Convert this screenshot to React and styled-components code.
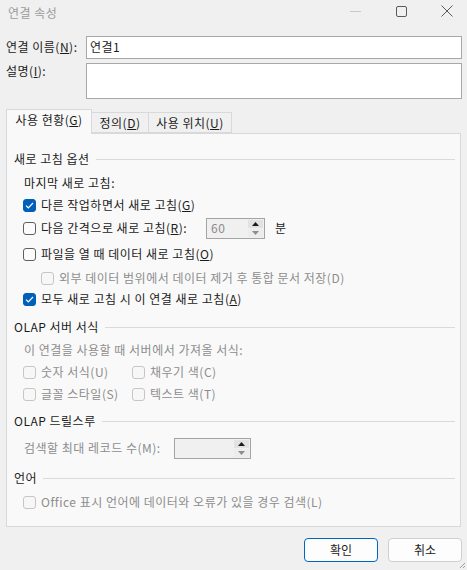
import styled, { createGlobalStyle } from 'styled-components'

const Global = createGlobalStyle`
  html, body { margin: 0; padding: 0; }
  body {
    background: #f0f0f0;
    font-family: "Noto Sans CJK KR", "Noto Sans", sans-serif;
    font-size: 12px;
    letter-spacing: 0.5px;
    color: #1b1b1b;
  }
  #root { width: 467px; height: 570px; overflow: hidden; }
`

const Window = styled.div`
  position: relative;
  width: 467px;
  height: 570px;
  display: flex;
  flex-direction: column;
  background: #f0f0f0;
`

const TitleBar = styled.div`
  height: 28px;
  display: flex;
  align-items: center;
  justify-content: space-between;
  padding-left: 8px;
`

const Title = styled.span`
  color: #9c9c9c;
  line-height: 1;
  margin-top: -3px;
`

const Controls = styled.div`
  display: flex;
  margin-right: -3px;
  height: 28px;
`

const Ctl = styled.div`
  width: 46px;
  height: 28px;
  display: flex;
  align-items: center;
  justify-content: center;
  margin-top: -3px;
`

const FieldRow = styled.div`
  display: flex;
  align-items: flex-start;
  padding: 0 5px 0 6px;
  margin-top: ${p => p.$mt || 0}px;
`

const FieldLabel = styled.label`
  width: 80px;
  line-height: 1;
  padding-top: ${p => p.$pt || 0}px;
`

const TextInput = styled.div`
  flex: 1;
  height: ${p => p.$h}px;
  box-sizing: border-box;
  border: 1px solid #a8a8a8;
  background: #fff;
  padding: 4px 3px;
  line-height: 1;
`

const Tabs = styled.div`
  display: flex;
  align-items: flex-end;
  margin: 10px 0 0 6px;
  height: 24px;
  position: relative;
  z-index: 1;
`

const Tab = styled.div`
  box-sizing: border-box;
  width: ${p => p.$w}px;
  height: ${p => (p.$active ? 25 : 21)}px;
  margin-bottom: ${p => (p.$active ? -1 : 0)}px;
  display: flex;
  align-items: center;
  justify-content: center;
  line-height: 1;
  background: ${p => (p.$active ? '#f9f9f9' : '#f0f0f0')};
  border: 1px solid #d9d9d9;
  border-bottom: ${p => (p.$active ? 'none' : '1px solid #d9d9d9')};
  border-left: ${p => (p.$first ? '1px solid #d9d9d9' : 'none')};
  padding-bottom: ${p => (p.$active ? 4 : 0)}px;
`

const Panel = styled.div`
  box-sizing: border-box;
  margin-left: 6px;
  width: 455px;
  height: 394px;
  background: #f9f9f9;
  border: 1px solid #d9d9d9;
  padding: 13px 5px 0 7px;
  display: flex;
  flex-direction: column;
`

const Section = styled.div`
  display: flex;
  flex-direction: column;
  margin-top: ${p => p.$mt || 0}px;
`

const GroupHead = styled.div`
  height: 24px;
  display: flex;
  align-items: center;
  line-height: 1;
  gap: 6px;
  &::after {
    content: '';
    flex: 1;
    height: 1px;
    background: #dadada;
  }
`

const Row = styled.div`
  height: ${p => p.$h || 22}px;
  display: flex;
  align-items: center;
  padding-left: ${p => p.$indent || 9}px;
  line-height: 1;
  color: ${p => (p.$disabled ? '#8d8d8d' : 'inherit')};
`

const RowLabel = styled.span`
  width: ${p => p.$w}px;
  flex: none;
`

const CheckWrap = styled.label`
  display: flex;
  align-items: center;
  gap: 5px;
  flex: none;
  width: ${p => (p.$w ? `${p.$w}px` : 'auto')};
  color: ${p => (p.$disabled ? '#8d8d8d' : 'inherit')};
`

const Box = styled.span`
  box-sizing: border-box;
  width: 13px;
  height: 13px;
  border-radius: 3px;
  flex: none;
  display: flex;
  align-items: center;
  justify-content: center;
  background: ${p => (p.$checked ? '#005fb8' : p.$disabled ? '#f7f7f7' : '#fbfbfb')};
  border: 1px solid ${p => (p.$checked ? '#005fb8' : p.$disabled ? '#c6c6c6' : '#5f5f5f')};
`

const Spin = styled.div`
  box-sizing: border-box;
  width: ${p => p.$w}px;
  height: ${p => p.$h}px;
  flex: none;
  border: 1px solid #a4a4a4;
  background: #f0f0f0;
  display: flex;
  align-items: stretch;
  padding: 1px;
`

const SpinValue = styled.div`
  flex: 1;
  display: flex;
  align-items: center;
  padding-left: 3px;
  color: #8b8b8b;
`

const SpinBtns = styled.div`
  width: 15px;
  display: flex;
  flex-direction: column;
  gap: 1px;
`

const SpinBtn = styled.div`
  flex: 1;
  display: flex;
  align-items: center;
  justify-content: center;
  background: ${p => (p.$up ? '#e2e2e2' : '#ececec')};
`

const Unit = styled.span`
  margin-left: 10px;
`

const Footer = styled.div`
  display: flex;
  justify-content: flex-end;
  gap: 10px;
  padding-right: 5px;
  margin-top: 11px;
`

const Button = styled.button`
  box-sizing: border-box;
  width: 74px;
  height: 24px;
  border-radius: 4px;
  background: #fdfdfd;
  border: 1px solid ${p => (p.$primary ? '#0067c0' : '#cfcfcf')};
  font: inherit;
  color: #1b1b1b;
  line-height: 1;
  padding: 0;
`

const Grip = styled.svg`
  position: absolute;
  right: 1px;
  bottom: 1px;
`

const Check = ({ checked, disabled, w, children }) => (
  <CheckWrap $w={w} $disabled={disabled}>
    <Box $checked={checked} $disabled={disabled}>
      {checked && (
        <svg width="9" height="7" viewBox="0 0 9 7">
          <path d="M1 3.6 L3.3 5.8 L8 1" fill="none" stroke="#fff" strokeWidth="1.2" />
        </svg>
      )}
    </Box>
    <span>{children}</span>
  </CheckWrap>
)

const Spinner = ({ w, h, value }) => (
  <Spin $w={w} $h={h}>
    <SpinValue>{value}</SpinValue>
    <SpinBtns>
      <SpinBtn $up>
        <svg width="7" height="4" viewBox="0 0 7 4"><path d="M0 4 L3.5 0 L7 4Z" fill="#1b1b1b" /></svg>
      </SpinBtn>
      <SpinBtn>
        <svg width="7" height="4" viewBox="0 0 7 4"><path d="M0 0 L3.5 4 L7 0Z" fill="#8d8d8d" /></svg>
      </SpinBtn>
    </SpinBtns>
  </Spin>
)

export default function App() {
  return (
    <Window>
      <Global />
      <TitleBar>
        <Title>연결 속성</Title>
        <Controls>
          <Ctl>
            <svg width="11" height="1"><rect width="11" height="1" fill="#c8c8c8" /></svg>
          </Ctl>
          <Ctl>
            <svg width="11" height="11"><rect x="0.5" y="0.5" width="10" height="10" rx="1.5" fill="none" stroke="#5a5a5a" /></svg>
          </Ctl>
          <Ctl>
            <svg width="12" height="12"><path d="M0.5 0.5 L11.5 11.5 M11.5 0.5 L0.5 11.5" stroke="#5a5a5a" strokeWidth="1" /></svg>
          </Ctl>
        </Controls>
      </TitleBar>

      <FieldRow $mt={8}>
        <FieldLabel $pt={5}>연결 이름(<u>N</u>):</FieldLabel>
        <TextInput $h={23}>연결1</TextInput>
      </FieldRow>
      <FieldRow $mt={4}>
        <FieldLabel $pt={2}>설명(<u>I</u>):</FieldLabel>
        <TextInput $h={36} />
      </FieldRow>

      <Tabs>
        <Tab $w={86} $active $first>사용 현황(<u>G</u>)</Tab>
        <Tab $w={57}>정의(<u>D</u>)</Tab>
        <Tab $w={83}>사용 위치(<u>U</u>)</Tab>
      </Tabs>

      <Panel>
        <Section>
          <GroupHead>새로 고침 옵션</GroupHead>
          <Row $h={24} $indent={10}>마지막 새로 고침:</Row>
          <Row $h={20}><Check checked>다른 작업하면서 새로 고침(<u>G</u>)</Check></Row>
          <Row $h={26}>
            <Check w={183}>다음 간격으로 새로 고침(<u>R</u>):</Check>
            <Spinner w={59} h={21} value="60" />
            <Unit>분</Unit>
          </Row>
          <Row $h={26}><Check>파일을 열 때 데이터 새로 고침(<u>O</u>)</Check></Row>
          <Row $h={22} $indent={27}><Check disabled>외부 데이터 범위에서 데이터 제거 후 통합 문서 저장(D)</Check></Row>
          <Row $h={20}><Check checked>모두 새로 고침 시 이 연결 새로 고침(<u>A</u>)</Check></Row>
        </Section>

        <Section $mt={6}>
          <GroupHead>OLAP 서버 서식</GroupHead>
          <Row $disabled $indent={10}>이 연결을 사용할 때 서버에서 가져올 서식:</Row>
          <Row>
            <Check disabled w={109}>숫자 서식(U)</Check>
            <Check disabled>채우기 색(C)</Check>
          </Row>
          <Row>
            <Check disabled w={109}>글꼴 스타일(S)</Check>
            <Check disabled>텍스트 색(T)</Check>
          </Row>
        </Section>

        <Section $mt={4}>
          <GroupHead>OLAP 드릴스루</GroupHead>
          <Row $h={30} $indent={10} $disabled>
            <RowLabel $w={150}>검색할 최대 레코드 수(M):</RowLabel>
            <Spinner w={77} h={21} value="" />
          </Row>
        </Section>

        <Section $mt={3}>
          <GroupHead>언어</GroupHead>
          <Row $h={24}><Check disabled>Office 표시 언어에 데이터와 오류가 있을 경우 검색(L)</Check></Row>
        </Section>
      </Panel>

      <Footer>
        <Button $primary>확인</Button>
        <Button>취소</Button>
      </Footer>

      <Grip width="7" height="7" viewBox="0 0 7 7">
        <path d="M6 1 L1 6 M6 4 L4 6" stroke="#a0a0a0" strokeWidth="1" />
      </Grip>
    </Window>
  )
}
